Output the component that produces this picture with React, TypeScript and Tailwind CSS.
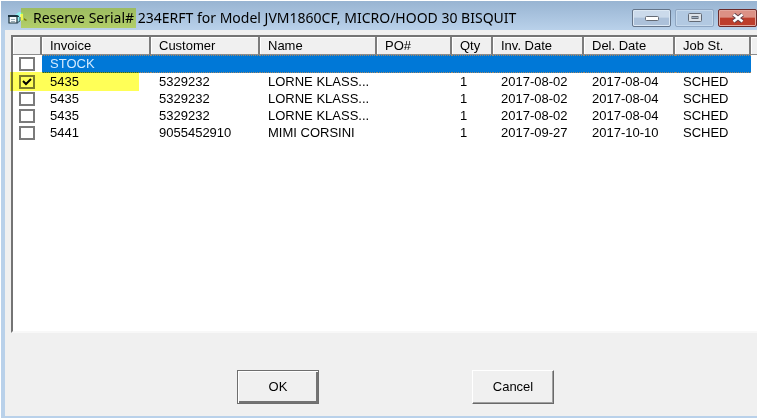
import { useState } from "react";

type Row = {
  invoice: string;
  customer: string;
  name: string;
  po: string;
  qty: string;
  invDate: string;
  delDate: string;
  status: string;
};

const rows: Row[] = [
  { invoice: "STOCK", customer: "", name: "", po: "", qty: "", invDate: "", delDate: "", status: "" },
  { invoice: "5435", customer: "5329232", name: "LORNE KLASS...", po: "", qty: "1", invDate: "2017-08-02", delDate: "2017-08-04", status: "SCHED" },
  { invoice: "5435", customer: "5329232", name: "LORNE KLASS...", po: "", qty: "1", invDate: "2017-08-02", delDate: "2017-08-04", status: "SCHED" },
  { invoice: "5435", customer: "5329232", name: "LORNE KLASS...", po: "", qty: "1", invDate: "2017-08-02", delDate: "2017-08-04", status: "SCHED" },
  { invoice: "5441", customer: "9055452910", name: "MIMI CORSINI", po: "", qty: "1", invDate: "2017-09-27", delDate: "2017-10-10", status: "SCHED" },
];

const headers = ["", "Invoice", "Customer", "Name", "PO#", "Qty", "Inv. Date", "Del. Date", "Job St.", ""];

const AppIcon = () => (
  <svg viewBox="0 0 20 14" className="h-3.5 w-5 shrink-0">
    <path d="M7 4l4-3 4 1v7l-4 2z" fill="#8ff0f2" />
    <path d="M12 3h3v6l-3 1z" fill="#f3f6a0" />
    <path d="M1 5h8v7H1z" fill="#f4f8fb" stroke="#1c3440" strokeWidth="1.200" />
    <path d="M0 4h9l2 1v1H0z" fill="#1c3440" />
    <path d="M3 8.500h4M3 10.500h4" stroke="#7f98a4" strokeWidth=".8" />
    <path d="M9 12l3-2V6" fill="none" stroke="#2d5360" />
    <path d="M16 7l3 2-1 1-2-1z" fill="#82801b" />
  </svg>
);

const TitleButtons = () => (
  <div className="flex gap-1">
    <button
      aria-label="Minimize"
      className="flex h-[18px] w-[39px] items-center justify-center rounded-[2px] border border-[#65758a] bg-linear-to-b from-[#cbdaeb] from-45% to-[#acc1da] to-50% inset-ring inset-ring-[#dce8f4]"
    >
      <svg viewBox="0 0 14 6" className="h-1.5 w-3.5">
        <rect x=".5" y="1.5" width="13" height="4" rx="1" fill="#fff" stroke="#656b75" />
      </svg>
    </button>
    <button
      aria-label="Maximize"
      className="flex h-[18px] w-[39px] items-center justify-center rounded-[2px] border border-[#8fa6c2] bg-[#b2c9e2] inset-ring inset-ring-[#c6d9ec]"
    >
      <svg viewBox="0 0 14 10" className="h-2.5 w-3.5">
        <rect x=".5" y=".5" width="13" height="8" rx="1" fill="#dce2e9" stroke="#626a76" />
        <rect x="4" y="3.5" width="6" height="2" fill="#9daec1" stroke="#626a76" />
      </svg>
    </button>
    <button
      aria-label="Close"
      className="flex h-[18px] w-[39px] items-center justify-center rounded-[2px] border border-[#6b2b2b] bg-linear-to-b from-[#dc9185] from-45% to-[#bd3e2c] to-50% inset-ring inset-ring-[#e3a79d]"
    >
      <svg viewBox="0 0 14 10" className="h-2.5 w-3.5">
        <path d="M2.500 1.500L11.500 8.500M11.500 1.500L2.500 8.500" stroke="#64424a" strokeWidth="4.500" />
        <path d="M2.500 1.500L11.500 8.500M11.500 1.500L2.500 8.500" stroke="#fff" strokeWidth="2.500" />
      </svg>
    </button>
  </div>
);

const App = () => {
  const [checked, setChecked] = useState<boolean[]>([false, true, false, false, false]);

  const toggle = (index: number) => {
    setChecked(checked.map((c, i) => (i === index ? !c : c)));
  };

  return (
    <div className="flex min-h-screen flex-col bg-white pt-px pl-px font-['Liberation_Sans',Arial,sans-serif] text-[13px] text-black">
      <div className="flex flex-1 flex-col border-b-2 border-l-4 border-[#b9d1ea] bg-[#f0f0f0]">
        <header className="-ml-1 flex h-[29px] items-center justify-between bg-linear-to-b from-[#98b4d2] to-[#b9d1ea] pt-1 pl-[7px]">
          <div className="flex min-w-0 items-center">
            <AppIcon />
            <h1 className="relative flex h-5 items-center pl-[5px] font-['Noto_Sans','Open_Sans',sans-serif] text-[14px] whitespace-nowrap">
              Reserve Serial# 234ERFT for Model JVM1860CF, MICRO/HOOD 30 BISQUIT
              <span className="absolute inset-y-0 -left-[7px] w-[115px] bg-[#f8ff50] opacity-80 mix-blend-multiply" />
            </h1>
          </div>
          <TitleButtons />
        </header>

        <main className="flex flex-1 flex-col pt-[5px] pl-1.5">
          <div className="flex-1 border-t-2 border-b-2 border-l-2 border-t-[#747474] border-b-[#f8f8f8] border-l-[#747474] bg-white">
            <table className="w-full table-fixed border-separate border-spacing-0">
              <colgroup>
                <col className="w-[29px]" />
                <col className="w-[109px]" />
                <col className="w-[109px]" />
                <col className="w-[117px]" />
                <col className="w-[75px]" />
                <col className="w-[41px]" />
                <col className="w-[91px]" />
                <col className="w-[91px]" />
                <col className="w-[76px]" />
                <col />
              </colgroup>
              <thead>
                <tr className="h-[18px] bg-[#f0f0f0]">
                  {headers.map((header, i) => (
                    <th
                      key={i}
                      className="border-r-2 border-b border-r-[#7c7c7c] border-b-[#8c8c8c] p-0 pl-2 text-left leading-[17px] font-normal whitespace-nowrap shadow-[inset_1px_1px_#fff] last:border-r-0"
                    >
                      {header}
                    </th>
                  ))}
                </tr>
              </thead>
              <tbody>
                {rows.map((row, i) => (
                  <tr key={i} className="h-[17px] leading-[17px] whitespace-nowrap first:h-[18px] first:text-[#d3ebff]">
                    <td className="relative p-0">
                      <label className="relative flex h-[17px] items-center pl-1.5">
                        <input
                          type="checkbox"
                          aria-label={"Reserve for " + row.invoice}
                          checked={checked[i]}
                          onChange={() => toggle(i)}
                          className="peer h-3.5 w-4 appearance-none border-2 border-[#7b7b7b] bg-white"
                        />
                        <svg viewBox="0 0 10 8" className="pointer-events-none absolute left-[9px] hidden h-2 w-2.5 peer-checked:block">
                          <path d="M1 3l3 3 5-5" fill="none" stroke="#000" strokeWidth="2" />
                        </svg>
                      </label>
                      {i === 1 && (
                        <span className="pointer-events-none absolute -inset-y-px -left-[3px] z-10 w-[129px] bg-[#ffff57] mix-blend-multiply" />
                      )}
                    </td>
                    {[row.invoice, row.customer, row.name, row.po, row.qty, row.invDate, row.delDate, row.status].map((cell, j) => (
                      <td
                        key={j}
                        className={
                          i === 0
                            ? "border-y border-dotted border-[#a08868] bg-[#0078d7] p-0 pl-2 leading-4"
                            : "p-0 pl-2"
                        }
                      >
                        {cell}
                      </td>
                    ))}
                    <td className="p-0" />
                  </tr>
                ))}
              </tbody>
            </table>
          </div>

          <div className="flex justify-center gap-[153px] pt-[37px] pb-3 pl-[23px]">
            <button className="h-[34px] w-[82px] border border-[#6e6e6e] bg-[#f0f0f0] shadow-[inset_1px_1px_#fff,inset_-2px_-2px_#737373]">
              OK
            </button>
            <button className="h-[34px] w-[82px] border border-t-white border-r-[#696969] border-b-[#696969] border-l-white bg-[#f0f0f0] shadow-[inset_-1px_-1px_#a0a0a0]">
              Cancel
            </button>
          </div>
        </main>
      </div>
    </div>
  );
};

export default App;
